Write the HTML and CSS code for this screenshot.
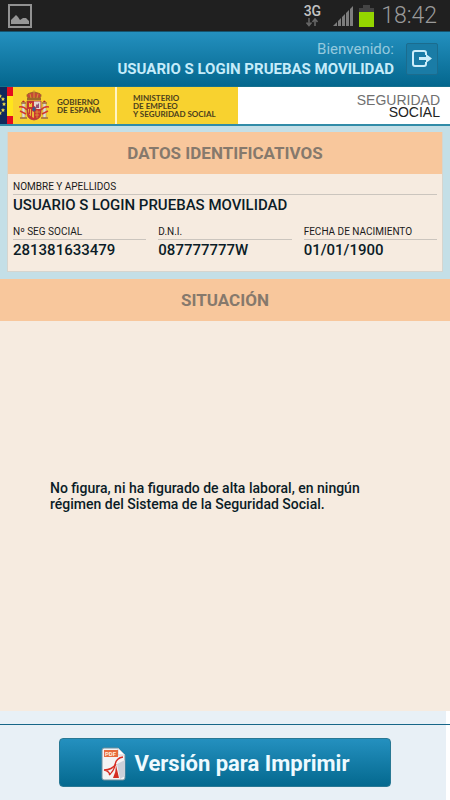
FILE: index.html
```html
<!DOCTYPE html>
<html lang="es">
<head>
<meta charset="utf-8">
<meta name="viewport" content="width=device-width, initial-scale=1">
<title>Seguridad Social</title>
<link rel="stylesheet" href="styles.css">
</head>
<body>
<div class="status">
  <svg class="status-picture" width="24" height="24" viewBox="0 0 24 24" aria-hidden="true">
    <rect x="1" y="1" width="22" height="22" fill="#222" stroke="#929292" stroke-width="2"/>
    <path d="M3 20v-4l2-2 3-3 2 2 2 3 3-2h3l3 3v3z" fill="#969696"/>
  </svg>
  <div class="network">
    <span>3G</span>
    <svg width="12" height="9" viewBox="0 0 12 9" aria-hidden="true">
      <path d="M3 0v7M0.500 4.500l2.500 3 2.500-3M9 8V1M6.500 4L9 1l2.500 3" fill="none" stroke="#666" stroke-width="1.600"/>
    </svg>
  </div>
  <svg class="signal" width="20" height="21" viewBox="0 0 20 21" aria-hidden="true">
    <path d="M0 21l4-4v4zM5 21v-5l3-3v8zM9 21v-9l3-3v12zM13 21V8l3-3v16zM17 21V4l3-3v20z" fill="#7d7d7d"/>
  </svg>
  <svg class="battery" width="15" height="22" viewBox="0 0 15 22" aria-hidden="true">
    <path d="M4 0h7v3h4v5H0V3h4z" fill="#444"/>
    <path d="M0 7h15v15H0z" fill="#94d500"/>
  </svg>
  <span class="clock">18:42</span>
</div>
<header class="topbar">
  <div class="welcome">
    <span class="hello">Bienvenido:</span>
    <span class="user">USUARIO S LOGIN PRUEBAS MOVILIDAD</span>
  </div>
  <button class="logout" type="button" aria-label="Salir">
    <svg width="20" height="18" viewBox="0 0 20 18" aria-hidden="true">
      <path d="M14 5V3q0-2-2-2H3Q1 1 1 3v11q0 2 2 2h9q2 0 2-2v-2" fill="none" stroke="#cdeefa" stroke-width="2"/>
      <path d="M7 7h7V4l6 4.500-6 4.500v-3H7z" fill="#cdeefa"/>
    </svg>
  </button>
</header>
<div class="banner">
  <svg class="flag" width="13" height="37" viewBox="0 0 13 37" aria-hidden="true">
    <path d="M0 0h7v37H0z" fill="#10295c"/>
    <path d="M7 0h6v37H7z" fill="#e30d20"/>
    <path d="M7 9h6v20H7z" fill="#ffe51c"/>
    <g fill="#e9d74b">
      <path id="star" d="M3 10l.6 1.300 1.400.2-1 1 .3 1.500-1.300-.7-1.300.7.3-1.500-1-1 1.400-.2z"/>
      <use href="#star" x="1" y="5"/><use href="#star" x="0" y="11"/>
      <use href="#star" x="-3" y="-3"/><use href="#star" x="-3" y="14"/>
    </g>
  </svg>
  <div class="government">
    <svg class="arms" width="30" height="31" viewBox="0 0 30 31" aria-hidden="true">
      <path d="M3 13h3v15H3zM24 13h3v15h-3z" fill="#e4dfcd" stroke="#a08b70" stroke-width=".5"/>
      <path d="M2 13h5M23 13h5M1 28h7M22 28h7" stroke="#a06c3f" stroke-width="1.500"/>
      <path d="M3 12q1-3 3 0zM24 12q1-3 3 0z" fill="#b3252a"/>
      <path d="M0 17q5-1 8 3M1 21l6 3M30 17q-5-1-8 3M29 21l-6 3" fill="none" stroke="#d2382f" stroke-width="1.500"/>
      <path d="M9 8Q6 4 11 3q4-2 8 0 5 1 2 5z" fill="#c64736" stroke="#94662a" stroke-width=".8"/>
      <path d="M15 0v8M13.500 1.500h3M11 4l1 4M19 4l-1 4" fill="none" stroke="#d2a030" stroke-width=".9"/>
      <path d="M8 8h14v2H8z" fill="#9c6927"/>
      <path d="M8 11h14v12q0 6-7 7-7-1-7-7z" fill="#cc3431" stroke="#a2453a" stroke-width=".8"/>
      <path d="M15 11.500h6.500V19H15z" fill="#e5d8d0"/>
      <path d="M17 18v-4l1 1 2-2v5z" fill="#935477"/>
      <path d="M10 17v-4h1v1h1v-1h1v4z" fill="#edc23d"/>
      <path d="M9 19h6v9q-6-2-6-9z" fill="#e9b63d"/>
      <path d="M10.500 19v5M12.500 19v8" stroke="#cc3431"/>
      <path d="M16 22h5M16 25h4M18 20v8" stroke="#d9a137" stroke-width=".8"/>
      <ellipse cx="15" cy="19" rx="2" ry="2.500" fill="#345b92" stroke="#bd3030" stroke-width=".8"/>
    </svg>
    <span>GOBIERNO<br>DE ESPAÑA</span>
  </div>
  <div class="ministry">MINISTERIO<br>DE EMPLEO<br>Y SEGURIDAD SOCIAL</div>
  <div class="brand"><span>SEGURIDAD</span><br>SOCIAL</div>
</div>
<main>
  <div class="identity">
    <section class="card">
      <h2>DATOS IDENTIFICATIVOS</h2>
      <dl class="fields">
        <div class="wide"><dt>NOMBRE Y APELLIDOS</dt><dd>USUARIO S LOGIN PRUEBAS MOVILIDAD</dd></div>
        <div><dt>Nº SEG SOCIAL</dt><dd>281381633479</dd></div>
        <div><dt>D.N.I.</dt><dd>087777777W</dd></div>
        <div><dt>FECHA DE NACIMIENTO</dt><dd>01/01/1900</dd></div>
      </dl>
    </section>
  </div>
  <section class="situation">
    <h2>SITUACIÓN</h2>
    <p>No figura, ni ha figurado de alta laboral, en ningún régimen del Sistema de la Seguridad Social.</p>
  </section>
</main>
<footer class="actions">
  <div class="actions-inner">
    <button class="print" type="button">
      <svg width="26" height="34" viewBox="0 0 26 34" aria-hidden="true">
        <path d="M3 1h14l7 7v23q0 2-2 2H3q-2 0-2-2V3q0-2 2-2z" fill="#f4f3f4" stroke="#6d8e9d"/>
        <path d="M17 1v7h7z" fill="#fff" stroke="#b7bec5" stroke-width=".7"/>
        <path d="M16 17l8-4v16l-5 3z" fill="#ccd0d9"/>
        <path d="M3 3h14v7H3z" fill="#e66b3d"/>
        <text class="pdf" x="4" y="9">PDF</text>
        <path d="M22 10q-7 1-8 8-1 6-6 10" fill="none" stroke="#d62d23" stroke-width="1.400"/>
        <path d="M3 23q8 0 12-6M3 23q5 1 6 5" fill="none" stroke="#d62d23" stroke-width="1.400"/>
        <path d="M12 31q3-6 3-13l3 13z" fill="#d52d22"/>
      </svg>
      <span>Versión para Imprimir</span>
    </button>
  </div>
</footer>
</body>
</html>
```

FILE: styles.css
```css
* {
  box-sizing: border-box;
}

body {
  display: flex;
  flex-direction: column;
  min-height: 100vh;
  margin: 0;
  background: #fff;
  color: #0b1c27;
  font-family: Roboto, "Liberation Sans", sans-serif;
}

button {
  padding: 0;
  font: inherit;
}

svg {
  display: block;
  flex: none;
}

h2,
p,
dl,
dd {
  margin: 0;
}

.status {
  display: flex;
  align-items: center;
  height: 31px;
  padding: 0 13px 0 8px;
  background: #202020;
}

.status-picture {
  margin-right: auto;
}

.network {
  display: flex;
  flex-direction: column;
  align-items: center;
  margin-right: 12px;
  color: #c4c4c4;
  font-size: 14px;
  font-weight: 500;
  line-height: 14px;
}

.signal {
  margin-right: 6px;
}

.battery {
  margin-right: 7px;
}

.clock {
  color: #9a9a9a;
  font-size: 23px;
  font-weight: 300;
  line-height: 31px;
}

.topbar {
  display: flex;
  align-items: center;
  justify-content: flex-end;
  gap: 12px;
  height: 55px;
  padding: 0 12px;
  border-top: 1px solid #16536e;
  background: linear-gradient(#2490bf, #04678e);
}

.welcome {
  display: flex;
  flex-direction: column;
  align-items: flex-end;
  line-height: 20px;
}

.hello {
  color: #94c9de;
  font-size: 15px;
}

.user {
  color: #c6ecfa;
  font-size: 15px;
  font-weight: 700;
}

.logout {
  display: flex;
  align-items: center;
  justify-content: center;
  width: 32px;
  height: 32px;
  border: 1px solid #1b6c8e;
  border-radius: 2px;
  background: #1a7ca6;
}

.banner {
  display: flex;
  height: 40px;
  border-top: 1px solid #16708d;
  border-bottom: 2px solid #318ca8;
  background: #fff;
  color: #4b401d;
  font-family: Lato, "Liberation Sans", sans-serif;
  font-size: 8px;
  font-weight: 700;
  line-height: 8px;
}

.government,
.ministry {
  display: flex;
  align-items: center;
  background: #f8d22f;
}

.government {
  gap: 8px;
  width: 102px;
  padding-left: 6px;
}

.ministry {
  width: 123px;
  padding-left: 16px;
  border-left: 2px solid #fff4c4;
}

.brand {
  margin-left: auto;
  padding: 7px 10px 0 0;
  color: #222;
  font-family: "Liberation Sans", sans-serif;
  font-size: 14px;
  font-weight: 400;
  line-height: 12px;
  text-align: right;
}

.brand span {
  color: #707070;
}

main {
  display: flex;
  flex: 1;
  flex-direction: column;
}

.identity {
  padding: 6px 7px 7px;
  background: #c4dfe7;
}

.card {
  border: 1px solid #d5d5cf;
  border-top: 0;
  background: #f6ebe0;
}

h2 {
  background: #f8c79c;
  color: #86796c;
  font-size: 17px;
  font-weight: 700;
  line-height: 42px;
  text-align: center;
}

.fields {
  display: grid;
  grid-template-columns: repeat(3, 1fr);
  gap: 10px 12px;
  padding: 6px 5px 11px;
}

.wide {
  grid-column: 1 / -1;
}

dt {
  border-bottom: 1px solid #cbc5be;
  color: #1a1a1a;
  font-size: 10px;
  line-height: 14px;
}

dd {
  font-size: 15px;
  font-weight: 500;
  line-height: 20px;
}

.situation {
  display: flex;
  flex: 1;
  flex-direction: column;
  background: #f6ebe0;
}

.situation p {
  margin: auto 50px;
  padding-bottom: 40px;
  font-size: 14px;
  font-weight: 500;
  line-height: 16px;
}

.actions {
  padding-top: 13px;
  background: linear-gradient(to left, #fff 4px, #e8f0f6 4px);
}

.actions-inner {
  padding: 13px 59px;
  border-top: 1px solid #176688;
}

.print {
  display: flex;
  align-items: center;
  justify-content: center;
  gap: 8px;
  width: 100%;
  height: 49px;
  padding-top: 2px;
  border: 1px solid #287894;
  border-radius: 4px;
  background: linear-gradient(#2490bf, #04698f);
  color: #eefaff;
  font-size: 22px;
  font-weight: 700;
}

.pdf {
  fill: #fff0df;
  font-size: 6px;
  font-weight: 700;
}
```
